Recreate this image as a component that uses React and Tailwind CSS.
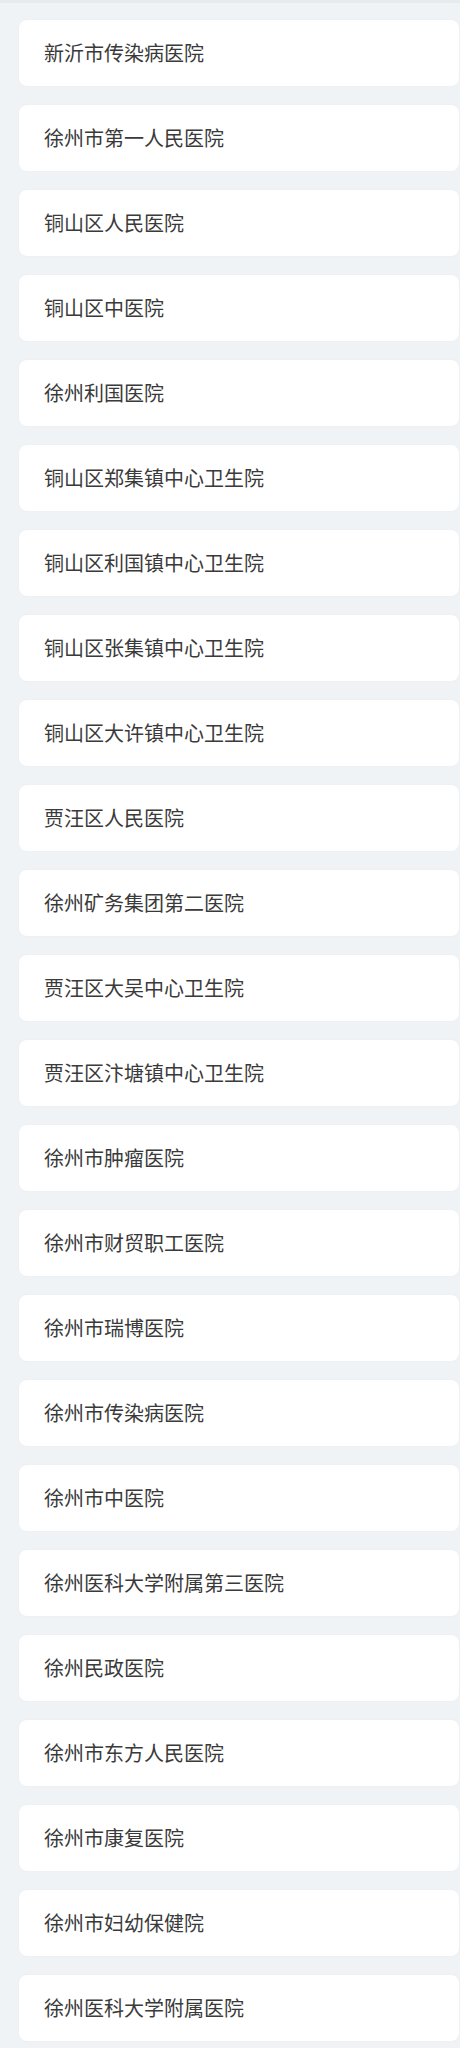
const hospitals = [
  "新沂市传染病医院",
  "徐州市第一人民医院",
  "铜山区人民医院",
  "铜山区中医院",
  "徐州利国医院",
  "铜山区郑集镇中心卫生院",
  "铜山区利国镇中心卫生院",
  "铜山区张集镇中心卫生院",
  "铜山区大许镇中心卫生院",
  "贾汪区人民医院",
  "徐州矿务集团第二医院",
  "贾汪区大吴中心卫生院",
  "贾汪区汴塘镇中心卫生院",
  "徐州市肿瘤医院",
  "徐州市财贸职工医院",
  "徐州市瑞博医院",
  "徐州市传染病医院",
  "徐州市中医院",
  "徐州医科大学附属第三医院",
  "徐州民政医院",
  "徐州市东方人民医院",
  "徐州市康复医院",
  "徐州市妇幼保健院",
  "徐州医科大学附属医院",
]

export default function App() {
  return (
    <div className="min-h-[2048px] bg-[#eff3f6] border-t-[3px] border-[#e6ebee] font-['Noto_Sans_CJK_SC','Noto_Sans',sans-serif]">
      <div className="flex flex-col gap-[19px] pt-[17px] pl-[19px] pr-px">
        {hospitals.map((name, i) => (
          <div
            key={i}
            className="h-[66px] flex items-center rounded-[8px] bg-white pl-[25px] text-[20px] text-[#3a3a3a] shadow-[0_0_2px_rgba(0,0,0,0.04)]"
          >
            {name}
          </div>
        ))}
      </div>
    </div>
  )
}
